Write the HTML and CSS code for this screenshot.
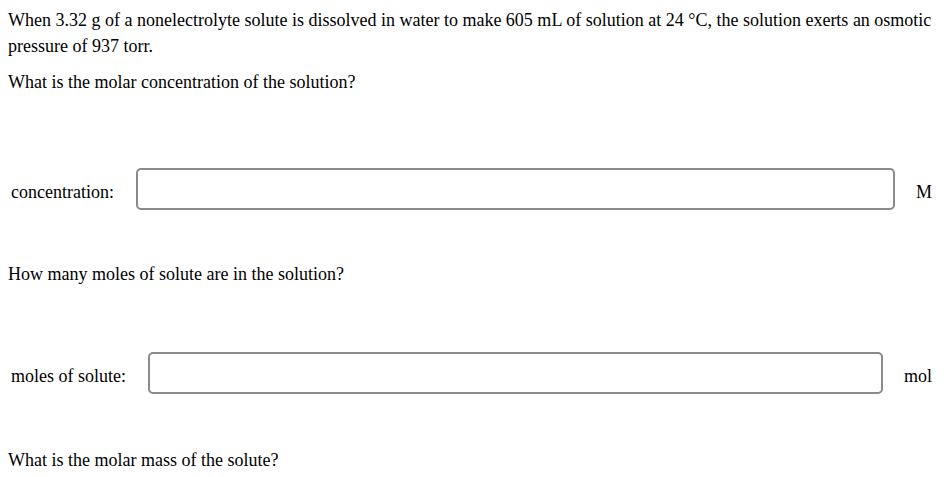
FILE: index.html
```html
<!DOCTYPE html>
<html>
<head>
<meta charset="utf-8">
<link rel="stylesheet" href="styles.css">
</head>
<body>
<div class="page">
  <p class="text">When 3.32 g of a nonelectrolyte solute is dissolved in water to make 605 mL of solution at 24 °C, the solution exerts an osmotic pressure of 937 torr.</p>
  <p class="text q1">What is the molar concentration of the solution?</p>
  <div class="row row1">
    <span class="label">concentration:</span>
    <input class="box" type="text">
    <span class="unit">M</span>
  </div>
  <p class="text q2">How many moles of solute are in the solution?</p>
  <div class="row row2">
    <span class="label">moles of solute:</span>
    <input class="box" type="text">
    <span class="unit">mol</span>
  </div>
  <p class="text q3">What is the molar mass of the solute?</p>
</div>
</body>
</html>
```
FILE: styles.css
```css
html, body {
  margin: 0;
  padding: 0;
  background: #fff;
}
body {
  font-family: "Liberation Serif", "Times New Roman", serif;
  font-size: 18px;
  color: #000;
}
.page {
  padding: 7px 8px 0 8px;
}
.text {
  margin: 0;
  line-height: 26px;
}
.q1 {
  margin-top: 10px;
}
.row {
  display: flex;
  align-items: center;
  gap: 22px;
  padding: 0 12px 0 3px;
}
.row1 {
  margin-top: 73px;
}
.row2 {
  margin-top: 65px;
}
.q2 {
  margin-top: 51px;
}
.q3 {
  margin-top: 53px;
}
.label {
  white-space: nowrap;
  padding-top: 6px;
  line-height: 20px;
}
.unit {
  white-space: nowrap;
  padding-top: 6px;
  line-height: 20px;
  margin-left: -1px;
}
.box {
  flex: 1;
  min-width: 0;
  height: 42px;
  box-sizing: border-box;
  border: 2px solid #8a8a8a;
  border-radius: 5px;
  background: #fff;
  margin: 0;
  padding: 0 8px;
  font: inherit;
  outline: none;
}
```
